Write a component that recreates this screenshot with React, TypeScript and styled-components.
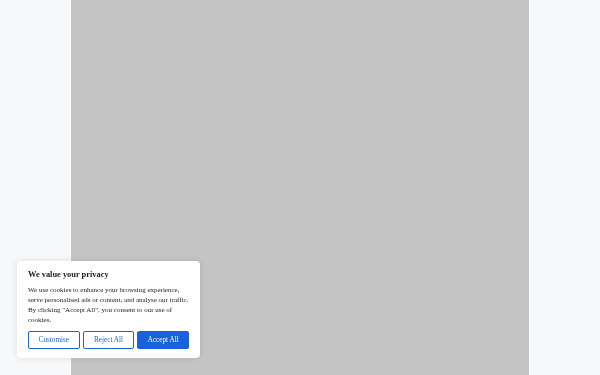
import React from 'react';
import styled, { createGlobalStyle } from 'styled-components';

const GlobalStyle = createGlobalStyle`
  html, body {
    margin: 0;
    padding: 0;
    height: 100%;
    background: #f7f8fa;
  }
  #root {
    height: 100%;
  }
`;

const Page = styled.div`
  display: flex;
  justify-content: center;
  height: 375px;
  background: #f7f8fa;
`;

const Column = styled.main`
  width: 458px;
  height: 100%;
  background: #c4c4c4;
  box-shadow: -1px 0 0 #fdfdfe, 1px 0 0 #fdfdfe;
`;

const Banner = styled.section`
  position: fixed;
  left: 17px;
  bottom: 17px;
  width: 183px;
  box-sizing: border-box;
  padding: 8px 11px 9px 11px;
  background: #ffffff;
  border-radius: 4px;
  box-shadow: 0 0 6px rgba(0, 0, 0, 0.12);
  font-family: 'Liberation Serif', 'Times New Roman', serif;
  color: #212121;
`;

const Title = styled.h2`
  margin: 0 0 4px;
  font-size: 8.4px;
  font-weight: 700;
  line-height: 12px;
`;

const Text = styled.p`
  margin: 0 -4px 0 0;
  font-size: 7px;
  line-height: 10px;
  color: #212121;
`;

const Actions = styled.div`
  display: flex;
  gap: 3px;
  margin-top: 6px;
`;

const Button = styled.button<{ $primary?: boolean }>`
  flex: 1;
  height: 18px;
  padding: 0;
  border: 1px solid #1863dc;
  border-radius: 2px;
  background: ${p => (p.$primary ? '#1863dc' : '#ffffff')};
  color: ${p => (p.$primary ? '#ffffff' : '#1863dc')};
  font-family: 'Liberation Serif', 'Times New Roman', serif;
  font-size: 7.2px;
  cursor: pointer;
`;

const App: React.FC = () => (
  <>
    <GlobalStyle />
    <Page>
      <Column />
    </Page>
    <Banner>
      <Title>We value your privacy</Title>
      <Text>
        We use cookies to enhance your browsing experience, serve personalised ads or content, and
        analyse our traffic. By clicking &quot;Accept All&quot;, you consent to our use of cookies.
      </Text>
      <Actions>
        <Button>Customise</Button>
        <Button>Reject All</Button>
        <Button $primary>Accept All</Button>
      </Actions>
    </Banner>
  </>
);

export default App;
